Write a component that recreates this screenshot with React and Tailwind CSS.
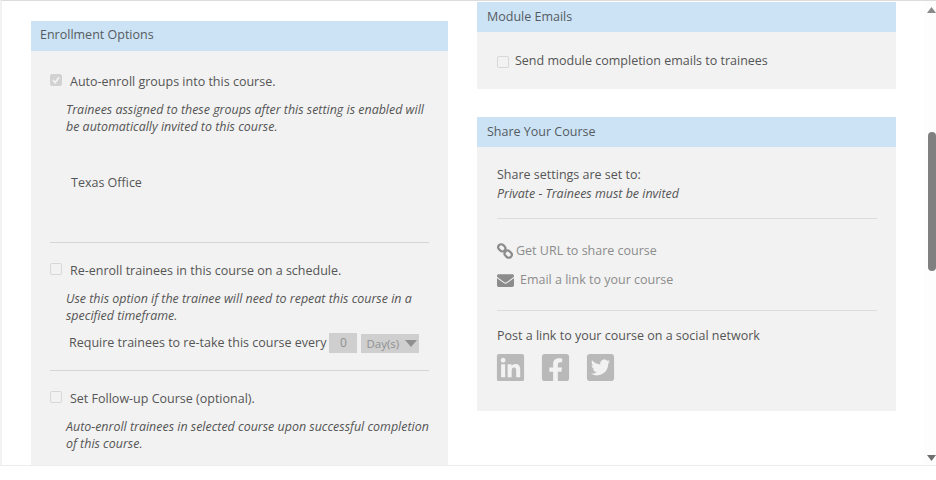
import React from "react";
import { FaEnvelope, FaLinkedin, FaFacebookSquare, FaTwitterSquare } from "react-icons/fa";

const Box = ({ checked }) => (
  <span className={`block shrink-0 w-[12px] h-[12px] rounded-[2px] border flex items-center justify-center ${checked ? "bg-[#d2d2d2] border-[#d2d2d2]" : "bg-[#f2f2f2] border-[#d8d8d8]"}`}>
    {checked && (
      <svg width="10" height="10" viewBox="0 0 10 10" fill="none">
        <path d="M2 5.2 L4.2 7.6 L8 2.2" stroke="#f2f2f2" strokeWidth="1.8" />
      </svg>
    )}
  </span>
);

const Check = ({ checked, children }) => (
  <div className="flex items-start h-[18px]">
    <span className="mt-[2px]"><Box checked={checked} /></span>
    <span className="ml-[8px] mt-[1px] leading-[18px]">{children}</span>
  </div>
);

const Note = ({ children }) => <p className="italic text-[12.45px] leading-[17px] ml-[16px] -mr-[4px]">{children}</p>;

const Header = ({ children, left }) => (
  <div className={`h-[30px] bg-[#cce3f5] text-[#555b61] ${left ? "pl-[9px] leading-[27px]" : "pl-[10px] leading-[29px]"}`}>{children}</div>
);

const LinkIcon = () => (
  <svg width="16" height="16" viewBox="0 0 16 16" fill="none" stroke="#8c8c8c" strokeWidth="2.2">
    <rect x="1" y="1.8" width="7.6" height="6" rx="3" transform="rotate(45 4.8 4.8)" />
    <rect x="7.4" y="8.2" width="7.6" height="6" rx="3" transform="rotate(45 11.2 11.2)" />
  </svg>
);

export default function App() {
  return (
    <div className="relative h-[480px] w-[936px] bg-white overflow-hidden text-[12.5px] text-[#555555]" style={{ fontFamily: '"Open Sans", sans-serif' }}>
      <div className="h-[465px] overflow-hidden border-t border-[#dcdcdc] border-l-2 border-l-[#f2f2f2] flex">
        <div className="w-[417px] ml-[29px] mt-[20px] shrink-0">
          <Header left>Enrollment Options</Header>
          <div className="bg-[#f2f2f2] h-[430px] px-[19px] pt-[21px]">
            <Check checked>Auto-enroll groups into this course.</Check>
            <div className="mt-[11px]">
              <Note>Trainees assigned to these groups after this setting is enabled will be automatically invited to this course.</Note>
            </div>
            <div className="h-[108px] pt-[39px] pl-[21px] leading-[18px] border-b border-[#d4d4d4] mb-[18px]">Texas Office</div>
            <Check>Re-enroll trainees in this course on a schedule.</Check>
            <div className="mt-[11px]">
              <Note>Use this option if the trainee will need to repeat this course in a specified timeframe.</Note>
            </div>
            <div className="flex items-center mt-[9px] ml-[19px] h-[20px] whitespace-nowrap">
              <span>Require trainees to re-take this course every</span>
              <span className="ml-[3px] w-[28px] h-[20px] bg-[#cfcfcf] text-[#8f8f8f] flex items-center justify-center text-[12px]">0</span>
              <span className="ml-[4px] w-[58px] h-[19px] mt-[1px] bg-[#cfcfcf] text-[#8f8f8f] flex items-center pl-[5px] text-[11.5px]">
                Day(s)
                <svg className="ml-[6px]" width="12" height="7" viewBox="0 0 12 7"><path d="M0 0H12L6 7Z" fill="#8f8f8f" /></svg>
              </span>
            </div>
            <div className="border-b border-[#d4d4d4] mt-[17px] mb-[18px]" />
            <Check>Set Follow-up Course (optional).</Check>
            <div className="mt-[11px]">
              <Note>Auto-enroll trainees in selected course upon successful completion of this course.</Note>
            </div>
          </div>
        </div>

        <div className="w-[419px] ml-[29px] mt-[1px] shrink-0">
          <Header>Module Emails</Header>
          <div className="bg-[#f2f2f2] h-[57px] px-[20px] pt-[20px] flex items-start">
            <span className="mt-[4px]"><Box /></span>
            <span className="ml-[6px] leading-[18px]">Send module completion emails to trainees</span>
          </div>
          <div className="mt-[28px]">
            <Header>Share Your Course</Header>
          </div>
          <div className="bg-[#f2f2f2] h-[264px] pl-[20px] pr-[19px] pt-[18px]">
            <p className="leading-[19px]">Share settings are set to:</p>
            <p className="italic text-[12.45px] leading-[19px]">Private - Trainees must be invited</p>
            <div className="border-b border-[#dcdcdc] mt-[15px]" />
            <div className="flex items-center mt-[23px] h-[18px] text-[#8c8c8c]">
              <LinkIcon />
              <span className="ml-[3px]">Get URL to share course</span>
            </div>
            <div className="flex items-center mt-[11px] h-[18px] text-[#8c8c8c]">
              <FaEnvelope className="w-[17px] h-[17px] text-[#8c8c8c]" />
              <span className="ml-[6px]">Email a link to your course</span>
            </div>
            <div className="border-b border-[#dcdcdc] mt-[21px]" />
            <p className="mt-[16px] leading-[18px]">Post a link to your course on a social network</p>
            <div className="flex mt-[9px] gap-[18px] text-[#b9b9b9]">
              <FaLinkedin className="w-[27px] h-[27px] scale-[1.15]" />
              <FaFacebookSquare className="w-[27px] h-[27px] scale-[1.15]" />
              <FaTwitterSquare className="w-[27px] h-[27px] scale-[1.15]" />
            </div>
          </div>
        </div>
      </div>
      <div className="border-t border-[#ececec]" />

      <div className="absolute top-[1px] right-0 w-[12px] h-[464px] bg-[#fdfdfd]">
        <svg className="absolute top-[6px] left-[3px]" width="9" height="6" viewBox="0 0 9 6"><path d="M0 6H9L4.5 0Z" fill="#8a8a8a" /></svg>
        <div className="absolute top-[131px] left-[4px] w-[8px] h-[139px] rounded-t-[4px] rounded-b-[4px] bg-[#808080]" />
        <svg className="absolute top-[454px] left-[3px]" width="9" height="6" viewBox="0 0 9 6"><path d="M0 0H9L4.5 6Z" fill="#6e6e6e" /></svg>
      </div>
    </div>
  );
}
